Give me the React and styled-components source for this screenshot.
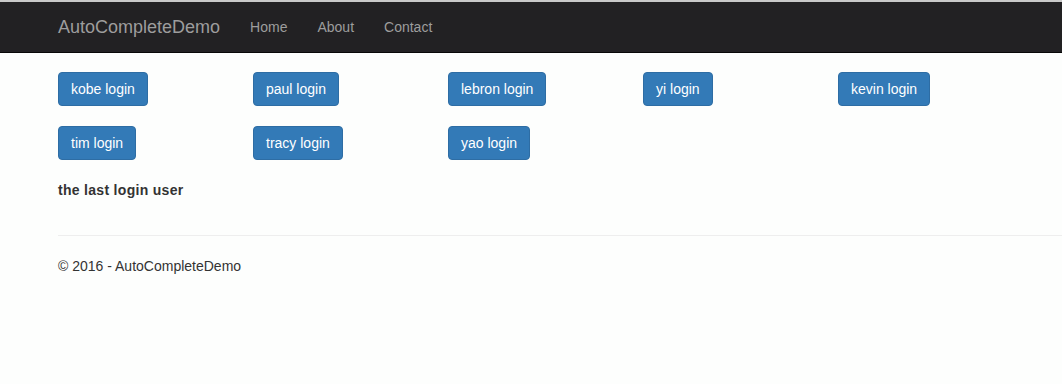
import React from 'react';
import styled, { createGlobalStyle } from 'styled-components';

const users = ['kobe', 'paul', 'lebron', 'yi', 'kevin', 'tim', 'tracy', 'yao'];

const GlobalStyle = createGlobalStyle`
  html, body {
    margin: 0;
    padding: 0;
    background: #fdfefd;
    font-family: "Liberation Sans", Arial, Helvetica, sans-serif;
    font-size: 14px;
    line-height: 20px;
    color: #333;
  }
`;

const Page = styled.div`
  border-top: 2px solid #c9c9c9;
  min-height: 382px;
`;

const NavBar = styled.nav`
  height: 50px;
  background: #222123;
  border-bottom: 1px solid #080808;
  display: flex;
  align-items: center;
  padding-left: 43px;
`;

const Brand = styled.a`
  font-size: 18px;
  line-height: 20px;
  color: #9d9d9d;
  padding: 15px;
  text-decoration: none;
`;

const NavLink = styled.a`
  font-size: 14px;
  line-height: 20px;
  color: #9d9d9d;
  padding: 15px;
  text-decoration: none;
`;

const Content = styled.main`
  padding: 19px 0 0 58px;
`;

const ButtonGrid = styled.div`
  display: grid;
  grid-template-columns: repeat(5, 195px);
  row-gap: 20px;
  align-items: start;
`;

const LoginButton = styled.button`
  justify-self: start;
  font-family: "Liberation Sans", Arial, Helvetica, sans-serif;
  font-size: 14px;
  line-height: 20px;
  padding: 6px 12px;
  color: #fff;
  background: #337ab7;
  border: 1px solid #2e6da4;
  border-radius: 4px;
  cursor: pointer;
`;

const LastUser = styled.div`
  margin-top: 20px;
  font-weight: bold;
  letter-spacing: 0.3px;
  color: #333;
`;

const Divider = styled.hr`
  margin: 35px 0 20px;
  border: 0;
  border-top: 1px solid #eee;
`;

const Footer = styled.footer`
  color: #333;
`;

export default function App() {
  return (
    <Page>
      <GlobalStyle />
      <NavBar>
        <Brand href="#">AutoCompleteDemo</Brand>
        <NavLink href="#">Home</NavLink>
        <NavLink href="#">About</NavLink>
        <NavLink href="#">Contact</NavLink>
      </NavBar>
      <Content>
        <ButtonGrid>
          {users.map((u) => (
            <LoginButton key={u}>{u} login</LoginButton>
          ))}
        </ButtonGrid>
        <LastUser>the last login user</LastUser>
        <Divider />
        <Footer>© 2016 - AutoCompleteDemo</Footer>
      </Content>
    </Page>
  );
}
